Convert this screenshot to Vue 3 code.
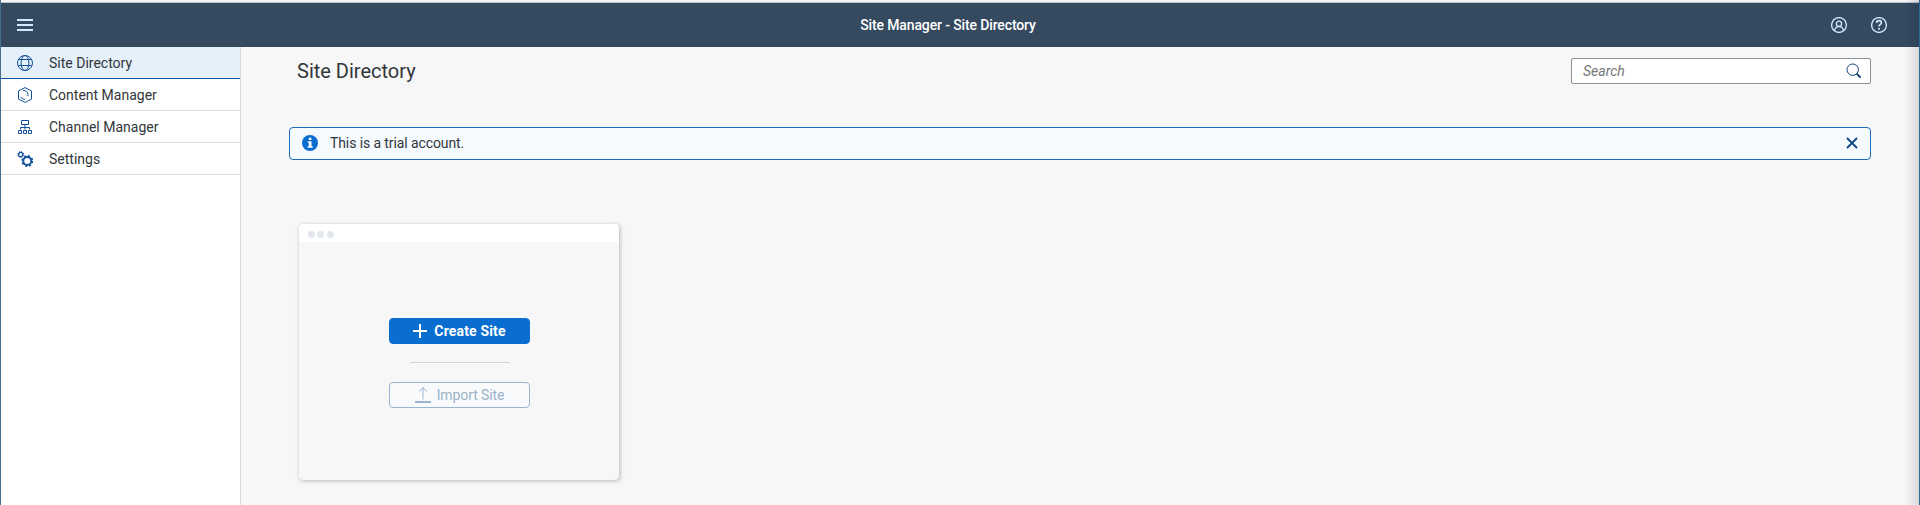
<script setup>
const items = [
  { label: 'Site Directory', icon: 'globe' },
  { label: 'Content Manager', icon: 'cube' },
  { label: 'Channel Manager', icon: 'tree' },
  { label: 'Settings', icon: 'gears' },
]
</script>

<template>
  <div class="window">
    <header class="shell">
      <svg class="burger" width="16" height="12" viewBox="0 0 16 12"><path d="M0 1h16M0 6h16M0 11h16" stroke="#d1e8ff" stroke-width="2" /></svg>
      <h1>Site Manager - Site Directory</h1>
      <div class="tools">
        <svg width="16" height="16" viewBox="0 0 16 16" fill="none" stroke="#d1e8ff" stroke-width="1.3">
          <circle cx="8" cy="8" r="7.4" /><circle cx="8" cy="6.8" r="2.6" /><path d="M3.600 13.400C4 10.800 5.800 9.600 8 9.600s4 1.200 4.400 3.800" />
        </svg>
        <svg width="16" height="16" viewBox="0 0 16 16" fill="none" stroke="#d1e8ff">
          <circle cx="8" cy="8" r="7.4" stroke-width="1.3" />
          <path d="M5.600 5.900C5.600 4.300 6.600 3.600 8 3.600s2.400.8 2.400 2.100C10.400 7.400 8 7.500 8 9.600" stroke-width="1.6" /><path d="M8 11v1.800" stroke-width="1.8" />
        </svg>
      </div>
    </header>
    <div class="body">
      <nav>
        <a v-for="(item, i) in items" :key="item.label" :class="{ selected: i === 0 }">
          <svg width="16" height="16" viewBox="0 0 16 16" fill="none" stroke="#12509a">
            <g v-if="item.icon === 'globe'">
              <circle cx="8" cy="8" r="7.5" /><ellipse cx="8" cy="8" rx="3.9" ry="7.5" /><path d="M1.500 4.500h13M1.500 10.500h13" />
            </g>
            <g v-else-if="item.icon === 'cube'">
              <path d="M8 .6 14.500 3.900v8.200L8 15.400 1.500 12.100V3.900z" stroke-linejoin="round" />
              <path d="M6 3.500c3 0 5 1.300 5 4v1.700M3.500 10.200l2.900 2 1.700.1" />
            </g>
            <g v-else-if="item.icon === 'tree'">
              <path d="M4.500 1.500h7v4h-7zM8 5.500v5M3.500 10.500v-2h9v2M1.500 11.500h3v3h-3zM6.500 11.500h3v3h-3zM11.500 11.500h3v3h-3z" />
            </g>
            <g v-else>
              <circle cx="3.700" cy="3.500" r="2.1" stroke-width="1.2" />
              <circle cx="3.700" cy="3.500" r="3" stroke-dasharray="1.2 1.156" />
              <circle cx="10.300" cy="10" r="4" stroke-width="1.9" />
              <circle cx="10.300" cy="10" r="5.300" stroke-width="1.5" stroke-dasharray="2.1 2.063" />
            </g>
          </svg>
          <span>{{ item.label }}</span>
        </a>
      </nav>
      <main>
        <div class="heading">
          <h2>Site Directory</h2>
          <div class="search">
            <span>Search</span>
            <svg width="16" height="16" viewBox="0 0 16 16" fill="none" stroke="#12407a">
              <circle cx="6.7" cy="6.7" r="5.7" /><path d="m10.600 10.600 4 4" stroke-width="2" />
            </svg>
          </div>
        </div>
        <div class="message">
          <svg width="16" height="16" viewBox="0 0 16 16">
            <circle cx="8" cy="8" r="8" fill="#0a6ed1" />
            <path d="M6.800 2.800h2.600v2.300H6.800zM5.800 6.300h3.700v5h1.200v1.500H5.600v-1.500h1.200V7.700h-1z" fill="#fff" />
          </svg>
          <span class="note">This is a trial account.</span>
          <svg class="close" width="12" height="12" viewBox="0 0 12 12"><path d="m1 1 10 10M11 1 1 11" stroke="#0d4585" stroke-width="1.8" /></svg>
        </div>
        <section class="card">
          <div class="bar"><i /><i /><i /></div>
          <div class="actions">
            <button class="create">
              <svg width="14" height="14" viewBox="0 0 14 14"><path d="M0 7h14M7 0v14" stroke="#fff" stroke-width="2" /></svg>
              <span>Create Site</span>
            </button>
            <hr />
            <button class="import">
              <svg width="16" height="16" viewBox="0 0 16 16" fill="none" stroke="#99b5d1"><path d="M8 .5v12M4 4.500 8 .7l4 3.800" /><path d="M0 15h16" stroke-width="2" /></svg>
              <span>Import Site</span>
            </button>
          </div>
        </section>
      </main>
    </div>
    <div class="edge" />
  </div>
</template>

<style>
body { overflow: hidden; }
</style>

<style scoped>
* { box-sizing: border-box; }
.window {
  position: relative; height: 505px; display: flex; flex-direction: column;
  border-left: 1px solid #47708d; background: #f7f7f7;
  font-family: Roboto, "Liberation Sans", sans-serif; font-size: 14px; color: #32363a;
}
.shell {
  height: 47px; flex: none; display: flex; align-items: center; padding: 0 33px 0 16px;
  border-top: 2px solid #f4f5f6; background: #354a5f; box-shadow: inset 0 1px #bcc2c8;
}
.burger { margin-top: 1px; }
h1 { flex: 1; margin: 1px 0 0 32px; text-align: center; font-size: 14px; font-weight: 500; letter-spacing: -.13px; color: #fff; white-space: nowrap; }
.tools { display: flex; gap: 24px; margin-top: 1px; }
.body { flex: 1; display: flex; min-height: 0; }
nav { width: 240px; flex: none; background: #fff; border-right: 1px solid #d9d9d9; }
nav a { height: 32px; display: flex; align-items: center; gap: 16px; padding-left: 16px; border-bottom: 1px solid #dedede; }
nav a.selected { background: #e5f0fa; border-bottom-color: #0854a0; }
main { flex: 1; padding: 0 49px 0 48px; }
.heading { height: 80px; display: flex; justify-content: space-between; align-items: flex-start; padding: 11px 0 0 8px; }
h2 { margin: 0; font-size: 20px; line-height: 26px; font-weight: 400; }
.search {
  width: 300px; height: 26px; padding: 0 8px 0 11px; display: flex; align-items: center; justify-content: space-between;
  background: #fff; border: 1px solid #89919a; border-radius: 2px; font-style: italic; color: #74777a;
}
.message {
  height: 33px; display: flex; align-items: center; gap: 12px; padding: 0 12px 1px;
  border: 1px solid #1b6db8; border-radius: 4px; background: #f5faff;
}
.note { letter-spacing: -.1px; }
.close { margin-left: auto; }
.card {
  width: 320px; height: 256px; margin: 64px 0 0 10px; display: flex; flex-direction: column; overflow: hidden;
  border-radius: 4px; background: #f7f7f7; box-shadow: 0 0 1px rgba(0,0,0,.15), 1px 1px 4px rgba(0,0,0,.25);
}
.bar { height: 18px; display: flex; gap: 2.5px; padding: 6.5px 0 0 8.5px; background: #fff; }
.bar i { width: 7px; height: 7px; border-radius: 50%; background: #e2e7ee; }
.actions { display: flex; flex-direction: column; align-items: center; padding: 76px 0 0 1px; }
button { width: 141px; height: 26px; padding: 0; display: flex; align-items: center; justify-content: center; border-radius: 4px; font: 14px Roboto, sans-serif; }
.create { gap: 7px; background: #0a6ed1; border: 1px solid #0a6ed1; color: #fff; font-weight: 700; letter-spacing: .15px; }
.import { gap: 6px; background: #f9fafb; border: 1px solid #99b5d1; color: #9bb3cb; letter-spacing: -.1px; }
hr { width: 100px; height: 1px; margin: 18px 0 19px; border: 0; background: #d2d5d8; }
.edge {
  position: absolute; top: 0; right: 0; bottom: 0; width: 16px; border-right: 1px solid #2d6794;
  background: linear-gradient(90deg, rgba(0,0,0,0), rgba(0,20,40,.13));
}
</style>
